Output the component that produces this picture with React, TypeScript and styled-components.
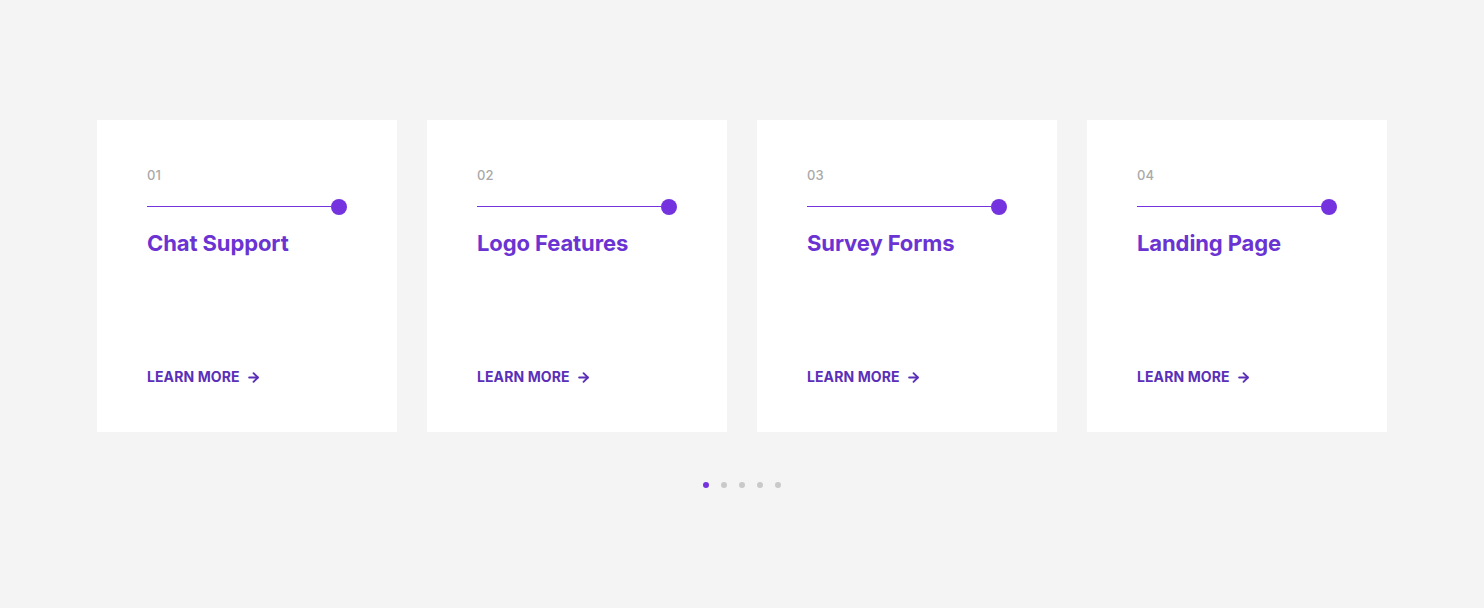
import React from "react";
import styled, { createGlobalStyle } from "styled-components";
import { ArrowRight } from "lucide-react";

interface IService {
  num: string;
  title: string;
}

const services: IService[] = [
  { num: "01", title: "Chat Support" },
  { num: "02", title: "Logo Features" },
  { num: "03", title: "Survey Forms" },
  { num: "04", title: "Landing Page" },
];

const App = () => {
  const [active, setActive] = React.useState<number>(0);
  return (
    <>
      <GlobalStyle />
      <Section>
        <CardRow>
          {services.map((s: IService, key: number) => {
            return (
              <Card key={key}>
                <Number>{s.num}</Number>
                <Track>
                  <Line />
                  <Knob />
                </Track>
                <Title>{s.title}</Title>
                <LearnMore href="#">
                  LEARN MORE <ArrowRight size={15} strokeWidth={3} />
                </LearnMore>
              </Card>
            );
          })}
        </CardRow>
        <Dots>
          {[0, 1, 2, 3, 4].map((i) => (
            <Dot key={i} active={i === active} onClick={() => setActive(i)} />
          ))}
        </Dots>
      </Section>
    </>
  );
};

export default App;

const GlobalStyle = createGlobalStyle`
  body {
    margin: 0;
    background: #f4f4f4;
    font-family: Inter, "Noto Sans", sans-serif;
  }
`;

const Section = styled.div`
  padding-top: 120px;
  min-height: 608px;
  box-sizing: border-box;
  display: flex;
  flex-direction: column;
  align-items: center;
`;

const CardRow = styled.div`
  display: flex;
  gap: 30px;
`;

const Card = styled.div`
  width: 300px;
  height: 312px;
  box-sizing: border-box;
  background: #fff;
  padding: 47px 50px 45px;
  display: flex;
  flex-direction: column;
`;

const Number = styled.div`
  font-size: 13px;
  line-height: 16px;
  color: #a9a9a9;
  font-weight: 500;
`;

const Track = styled.div`
  margin-top: 16px;
  height: 16px;
  display: flex;
  align-items: flex-start;
`;

const Line = styled.div`
  flex: 1;
  height: 1px;
  margin-top: 7px;
  background: #7433de;
`;

const Knob = styled.div`
  width: 16px;
  height: 16px;
  border-radius: 50%;
  background: #7433de;
`;

const Title = styled.h3`
  margin: 14px 0 0;
  font-size: 22px;
  line-height: 28px;
  font-weight: 700;
  color: #6a33d2;
  letter-spacing: -0.1px;
`;

const LearnMore = styled.a`
  margin-top: auto;
  display: flex;
  align-items: center;
  gap: 6px;
  font-size: 14px;
  line-height: 20px;
  font-weight: 700;
  color: #5b2fb8;
  text-decoration: none;
  letter-spacing: 0.1px;
`;

const Dots = styled.div`
  margin-top: 50px;
  display: flex;
  gap: 12px;
`;

const Dot = styled.span<{ active: boolean }>`
  width: 6px;
  height: 6px;
  border-radius: 50%;
  background: ${(p) => (p.active ? "#7433de" : "#c9c9c9")};
  cursor: pointer;
`;
